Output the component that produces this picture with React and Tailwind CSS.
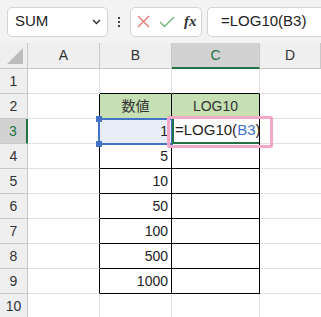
import React from "react";

const font = { fontFamily: '"Liberation Sans", "Noto Sans CJK JP", sans-serif' };

const rows = [
  { n: 1, b: "", c: "" },
  { n: 2, b: "数値", c: "LOG10", head: true },
  { n: 3, b: "1", c: "" },
  { n: 4, b: "5", c: "" },
  { n: 5, b: "10", c: "" },
  { n: 6, b: "50", c: "" },
  { n: 7, b: "100", c: "" },
  { n: 8, b: "500", c: "" },
  { n: 9, b: "1000", c: "" },
  { n: 10, b: "", c: "" },
];

function TopBar() {
  return (
    <div className="h-[43px] bg-[#f3f3f3] flex items-center pl-[7px] gap-0">
      <div className="w-[101px] h-[30px] bg-white border border-[#d4d4d4] rounded-[5px] flex items-center justify-between pl-[7px] pr-[6px]">
        <span className="text-[15px] text-[#222]">SUM</span>
        <svg width="9" height="6" viewBox="0 0 9 6">
          <path d="M1 1 L4.5 4.5 L8 1" stroke="#333" strokeWidth="1.5" fill="none" />
        </svg>
      </div>
      <div className="w-[22px] flex flex-col items-center gap-[2px]">
        <div className="w-[2px] h-[2px] bg-[#444]" />
        <div className="w-[2px] h-[2px] bg-[#444]" />
        <div className="w-[2px] h-[2px] bg-[#444]" />
      </div>
      <div className="w-[72px] h-[30px] bg-white border border-[#d4d4d4] rounded-[5px] flex items-center pl-[6px] gap-[9px]">
        <svg width="13" height="13" viewBox="0 0 13 13">
          <path d="M1 1 L12 12 M12 1 L1 12" stroke="#e0776f" strokeWidth="1.3" fill="none" />
        </svg>
        <svg width="16" height="12" viewBox="0 0 16 12">
          <path d="M1 6 L5.5 10.5 L15 1" stroke="#6fb27a" strokeWidth="1.3" fill="none" />
        </svg>
        <span className="text-[15px] italic font-bold text-[#333] leading-none" style={{ fontFamily: '"Liberation Serif", serif' }}>
          fx
        </span>
      </div>
      <div className="ml-[5px] flex-1 h-[30px] bg-white border border-[#d4d4d4] border-r-0 rounded-l-[5px] flex items-center pl-[13px]">
        <span className="text-[15px] text-[#222]">=LOG10(B3)</span>
      </div>
    </div>
  );
}

function ColHeader() {
  const cell = "h-[26px] border-r border-b border-[#c8c8c8] flex items-center justify-center text-[14px] text-[#333] bg-[#efefef]";
  return (
    <div className="flex">
      <div className={`${cell} w-[28px] relative`}>
        <div className="absolute right-[4px] bottom-[4px] w-0 h-0 border-l-[16px] border-l-transparent border-b-[16px] border-b-[#bdbdbd]" />
      </div>
      <div className={`${cell} w-[72px]`}>A</div>
      <div className={`${cell} w-[72px]`}>B</div>
      <div className="h-[26px] w-[88px] border-r border-[#c8c8c8] border-b-2 border-b-[#217346] flex items-center justify-center text-[14px] text-[#217346] bg-[#d2d2d2]">
        C
      </div>
      <div className={`${cell} flex-1`}>D</div>
    </div>
  );
}

function Row({ r }) {
  const inTable = r.n >= 2 && r.n <= 9;
  const sel = r.n === 3;
  const rowHead = sel
    ? "w-[28px] h-[25px] bg-[#d2d2d2] border-r-2 border-r-[#217346] border-b border-b-[#c8c8c8] text-[#217346]"
    : "w-[28px] h-[25px] bg-[#efefef] border-r border-b border-[#c8c8c8] text-[#333]";
  const aCell = `w-[72px] h-[25px] bg-white border-b border-[#e1e1e1] border-r ${inTable ? "border-r-black" : ""}`;
  const bBottom = r.n >= 1 && r.n <= 9 ? "border-b-black" : "border-b-[#e1e1e1]";
  const bRight = inTable ? "border-r-black" : "border-r-[#e1e1e1]";
  const bg = r.head ? "bg-[#c6e0b4]" : sel ? "bg-[#e8eef9]" : "bg-white";
  return (
    <div className="flex">
      <div className={`${rowHead} flex items-center justify-center text-[14px]`}>{r.n}</div>
      <div className={aCell} />
      <div
        className={`w-[72px] h-[25px] border-r border-b ${bRight} ${bBottom} ${bg} flex items-center ${
          r.head ? "justify-center text-[#333]" : "justify-end pr-[3px] text-[#222]"
        } text-[14px]`}
      >
        {r.b}
      </div>
      <div
        className={`w-[88px] h-[25px] border-r border-b ${bRight} ${bBottom} ${
          r.head ? "bg-[#c6e0b4]" : "bg-white"
        } flex items-center justify-center text-[14px] text-[#333]`}
      >
        {r.c}
      </div>
      <div className="flex-1 h-[25px] bg-white border-b border-[#e1e1e1]" />
    </div>
  );
}

export default function App() {
  return (
    <div className="w-[321px] h-[317px] overflow-hidden bg-white relative" style={font}>
      <TopBar />
      <ColHeader />
      {rows.map((r) => (
        <Row key={r.n} r={r} />
      ))}

      {/* B3 reference highlight */}
      <div className="absolute left-[98px] top-[118px] w-[75px] h-[27px] border-2 border-[#4472c4] pointer-events-none">
        <div className="absolute -left-[4px] -top-[4px] w-[6px] h-[6px] bg-[#4472c4]" />
        <div className="absolute -left-[4px] -bottom-[4px] w-[6px] h-[6px] bg-[#4472c4]" />
      </div>

      {/* C3 editing cell */}
      <div className="absolute left-[172px] top-[119px] w-[87px] h-[25px] bg-white border-l-2 border-l-[#217346] border-b-2 border-b-[#217346] flex items-center pl-[1px] text-[15px] text-[#222]">
        =LOG10(<span className="text-[#4472c4]">B3</span>)
      </div>

      {/* pink callout */}
      <div className="absolute left-[167px] top-[116px] w-[106px] h-[32px] border-[3px] border-[#f2a8c6] rounded-[2px]" />
    </div>
  );
}
